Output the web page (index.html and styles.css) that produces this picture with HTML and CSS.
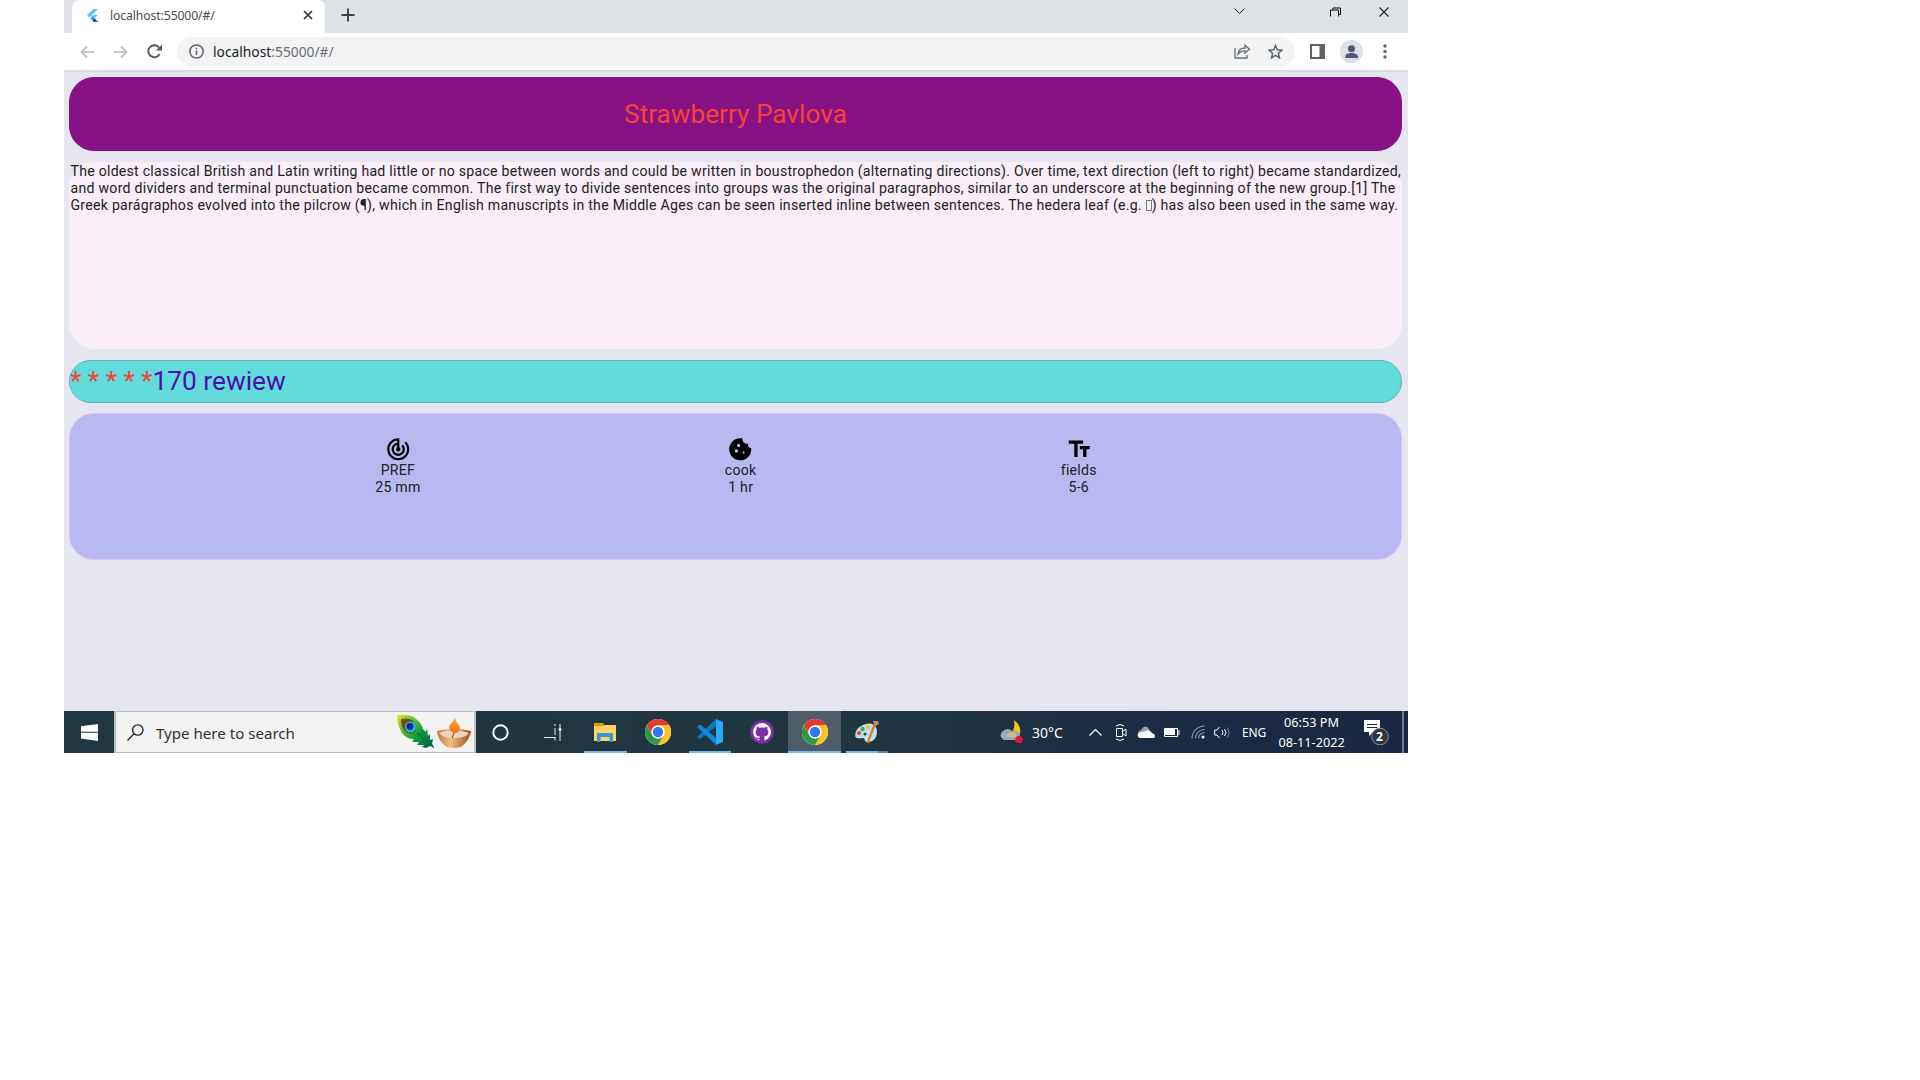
FILE: index.html
```
<!DOCTYPE html>
<html lang="en">
<head>
<meta charset="utf-8">
<title>localhost:55000/#/</title>
<link rel="stylesheet" href="styles.css">
</head>
<body>
<svg width="0" height="0" class="defs" aria-hidden="true">
  <symbol id="chrome" viewBox="0 0 48 48">
    <circle cx="24" cy="24" r="24" fill="#fff"/>
    <path fill="#e33b2e" d="M3.2 12A24 24 0 0 1 44.8 12H24a12 12 0 0 0-10.4 18z"/>
    <path fill="#fcc31e" d="M44.8 12A24 24 0 0 1 24 48L34.4 30A12 12 0 0 0 24 12z"/>
    <path fill="#2a9a47" d="M24 48A24 24 0 0 1 3.2 12L13.6 30a12 12 0 0 0 20.8 0z"/>
    <circle cx="24" cy="24" r="12" fill="#fff"/><circle cx="24" cy="24" r="9.6" fill="#2f78ee"/>
  </symbol>
</svg>
<div class="screen">
  <header class="tabs">
    <div class="tab">
      <svg class="flutter" width="11" height="13" viewBox="0 0 11 13"><path fill="#54c5f8" d="M6.5 0H11L2.2 8.5 0 6.3zM6.5 5.7H11L7.8 9 5 6.9z"/><path fill="#29a5ee" d="M3.2 9.2 5.4 7l2.3 2.2-2.3 2.2z"/><path fill="#01579b" d="M5.4 11.4 7.7 9.2 11 13H6.8z"/></svg>
      <span class="tab-title">localhost:55000/#/</span>
      <svg class="close" width="10" height="10" viewBox="0 0 10 10"><path d="M1 1l8 8M9 1L1 9" stroke="#333" stroke-width="1.7"/></svg>
    </div>
    <svg class="plus" width="14" height="14" viewBox="0 0 14 14"><path d="M7 .5v13M.5 7h13" stroke="#3c4043" stroke-width="1.9"/></svg>
    <svg class="win" width="112" height="14" viewBox="0 0 112 14" fill="none" stroke="#222" stroke-width="1"><path d="M.5 3.500l5 5 5-5"/><path stroke="#000" d="M96.500 11V4.500h8V11M99 4V2.500h7.500V9h-2" transform="translate(0 .5)"/></svg>
    <svg class="win-close" width="10" height="10" viewBox="0 0 10 10"><path d="M.5.5l9 9M9.500.5l-9 9" stroke="#222" stroke-width="1.100"/></svg>
  </header>
  <div class="toolbar">
    <svg width="14" height="12" viewBox="0 0 14 12" fill="none" stroke="#babcbe" stroke-width="1.600"><path d="M14 6H1.500M7 .7L1.500 6 7 11.300"/></svg>
    <svg width="14" height="12" viewBox="0 0 14 12" fill="none" stroke="#babcbe" stroke-width="1.600"><path d="M0 6h12.500M7 .7L12.500 6 7 11.300"/></svg>
    <svg class="reload" width="15" height="15" viewBox="0 0 15 15"><path d="M12.600 10A6 6 0 1 1 12 3.500" fill="none" stroke="#54575b" stroke-width="1.900"/><path d="M15 .5V6.500H9z" fill="#54575b"/></svg>
    <div class="omnibox">
      <svg width="15" height="15" viewBox="0 0 15 15"><circle cx="7.500" cy="7.500" r="6.600" fill="none" stroke="#5f6368" stroke-width="1.500"/><path d="M7.500 6.500V11M7.500 3.700v1.600" stroke="#5f6368" stroke-width="1.500"/></svg>
      <span class="url"><b>localhost</b>:55000/#/</span>
      <svg class="share" width="17" height="15" viewBox="0 0 17 15" fill="none" stroke="#6a6d71" stroke-width="1.300"><path d="M1 4v10h12v-3M4 10c.5-4 3-6 7-6V1.200L15.500 5.200 11 9V6.800C8 6.800 6 7.500 4 10z"/></svg>
      <svg width="15" height="15" viewBox="0 0 15 15" fill="none" stroke="#5f6368" stroke-width="1.500"><path d="M7.500 1.500l1.800 4.300 4.700.4-3.600 3.100 1.100 4.600-4-2.500-4 2.500 1.100-4.600L1 6.200l4.700-.4z"/></svg>
    </div>
    <svg class="side" width="15" height="15" viewBox="0 0 15 15"><path fill="#5f6368" fill-rule="evenodd" d="M0 0h15v15H0zM2 2v11h7.500V2z"/></svg>
    <svg class="avatar" width="23" height="23" viewBox="0 0 23 23"><circle cx="11.500" cy="11.500" r="11.500" fill="#dde1e7"/><circle cx="11.500" cy="8.800" r="3.500" fill="#4e5a70"/><path d="M5.300 18v-1.500c0-2.400 3.500-3.500 6.200-3.500s6.400 1.100 6.400 3.500V18z" fill="#4e5a70"/></svg>
    <svg width="4" height="15" viewBox="0 0 4 15" fill="#5f6368"><circle cx="2" cy="2" r="1.700"/><circle cx="2" cy="7.500" r="1.700"/><circle cx="2" cy="13" r="1.700"/></svg>
  </div>
  <main class="app">
    <h1 class="title">Strawberry Pavlova</h1>
    <div class="story">
      <p class="l1"><span>The oldest classical British and Latin writing had little or no space between words and could be written in boustrophedon (alternating directions). Over time, text direction (left to right) became standardized,</span></p>
      <p class="l2"><span>and word dividers and terminal punctuation became common. The first way to divide sentences into groups was the original paragraphos, similar to an underscore at the beginning of the new group.[1] The</span></p>
      <p class="l3"><span>Greek parágraphos evolved into the pilcrow (¶), which in English manuscripts in the Middle Ages can be seen inserted inline between sentences. The hedera leaf (e.g. <i class="tofu"></i>) has also been used in the same way.</span></p>
    </div>
    <div class="reviews"><span class="stars">* * * * *</span><span class="count">170 rewiew</span></div>
    <div class="facts">
      <div class="fact"><svg viewBox="0 0 24 24"><path d="M19.070 4.930l-1.410 1.410C19.100 7.790 20 9.790 20 12c0 4.420-3.580 8-8 8s-8-3.580-8-8c0-4.080 3.050-7.440 7-7.930v2.020C8.160 6.570 6 9.030 6 12c0 3.310 2.690 6 6 6s6-2.690 6-6c0-1.660-.67-3.160-1.760-4.240l-1.410 1.410C15.550 9.900 16 10.900 16 12c0 2.210-1.790 4-4 4s-4-1.790-4-4c0-1.860 1.280-3.410 3-3.860v2.140c-.6.35-1 .98-1 1.720 0 1.100.9 2 2 2s2-.9 2-2c0-.74-.4-1.380-1-1.720V2h-1C6.480 2 2 6.480 2 12s4.480 10 10 10 10-4.480 10-10c0-2.760-1.120-5.260-2.930-7.070z"/></svg><span>PREF</span><span>25 mm</span></div>
      <div class="fact"><svg viewBox="0 0 24 24"><path d="M21.950 10.990c-1.790-.03-3.700-1.950-2.680-4.220-2.980 1-5.770-1.590-5.190-4.560C6.950.71 2 6.580 2 12c0 5.520 4.480 10 10 10 5.890 0 10.540-5.080 9.950-11.010zM8.500 15c-.83 0-1.500-.67-1.500-1.500S7.670 12 8.500 12s1.500.67 1.500 1.500S9.330 15 8.500 15zm2-5C9.670 10 9 9.330 9 8.500S9.670 7 10.500 7s1.500.67 1.500 1.500-.67 1.500-1.500 1.500zm4.500 6c-.55 0-1-.45-1-1s.45-1 1-1 1 .45 1 1-.45 1-1 1z"/></svg><span>cook</span><span>1 hr</span></div>
      <div class="fact"><svg viewBox="0 0 24 24"><path d="M2.500 4v3h5v12h3V7h5V4h-13zm19 5h-9v3h3v7h3v-7h3V9z"/></svg><span>fields</span><span>5-6</span></div>
    </div>
  </main>
  <footer class="taskbar">
    <div class="start"><svg width="17" height="17" viewBox="0 0 17 17" fill="#fff"><path d="M0 2.200L17 0v7.700H0zM0 8.700h17V17L0 14.500z"/></svg></div>
    <div class="search">
      <svg width="17" height="17" viewBox="0 0 17 17" fill="none" stroke="#222" stroke-width="1.300"><circle cx="10.800" cy="6" r="5.200"/><path d="M7 9.800L.5 16.500"/></svg>
      <span class="placeholder">Type here to search</span>
      <svg class="feather" width="38" height="34" viewBox="0 0 38 34"><defs><linearGradient id="fg" x1="0" y1="0" x2="1" y2="1"><stop offset="0" stop-color="#f4e427"/><stop offset=".3" stop-color="#57c22b"/><stop offset=".65" stop-color="#07923e"/><stop offset="1" stop-color="#045c48"/></linearGradient></defs><path fill="url(#fg)" d="M0 0c8-1 15 0 19 4 5 4 6 7 7 10l3 3 1-4 1 8 2-2 0 6 3-1-1 5 2 3-4-1-4 2-4-1 2-2-7 0 2-3-7 0 2-3c-5 0-9-2-12-6C2 13 0 7 0 0z"/><path fill="#744d14" d="M4 4c8-2 14 1 15 8s-6 8-10 5-5-8-5-13z"/><circle cx="13.500" cy="12" r="5.500" fill="#10c4de"/><circle cx="13" cy="11.500" r="3.400" fill="#0b1d9b"/><path d="M20 18l17 15" stroke="#05604a" stroke-width="1"/></svg>
      <svg class="diya" width="34" height="31" viewBox="0 0 34 31"><defs><linearGradient id="bg"><stop offset="0" stop-color="#c07338"/><stop offset=".4" stop-color="#f0bd7c"/><stop offset="1" stop-color="#994f24"/></linearGradient><linearGradient id="fl" x1="0" y1="0" x2="0" y2="1"><stop offset="0" stop-color="#ffb02e"/><stop offset="1" stop-color="#fb741b"/></linearGradient></defs><path fill="url(#bg)" d="M0 14q17-4 34 0c-1 7-5 12-10 16q-7 2-14 0C4 26 1 21 0 14z"/><path fill="#ecd4bd" d="M2 16q15-6 30 0c-3 4-8 5-15 5S5 20 2 16z"/><path fill="url(#fl)" d="M18 0c0 5 5 8 5 11s-3 6-6 5-5-3-5-6c1-4 5-5 6-10z"/><path d="M17 16l-2 5" stroke="#704025"/></svg>
    </div>
    <div class="task first"><svg width="17" height="17" viewBox="0 0 17 17"><circle cx="8.500" cy="8.500" r="7.200" fill="none" stroke="#fff" stroke-width="2"/></svg></div>
    <div class="task"><svg width="18" height="17" viewBox="0 0 18 17" stroke="#e8eeee" fill="#fff"><path d="M0 13.500h11.500M11 0v2M11 4v7M11 13v3.500M16 0v17" fill="none"/><circle cx="16" cy="5.500" r="1.200"/></svg></div>
    <div class="task open"><svg width="22" height="19" viewBox="0 0 22 19"><path fill="#e09b00" d="M0 0h9l1.500 2H22v6H0z"/><path fill="#ffd465" d="M0 3h10l1-1h11v16H0z"/><path fill="#3498db" d="M3 10h16v9h-3.500v-5h-9v5H3z"/></svg></div>
    <div class="task"><svg width="26" height="26"><use href="#chrome"/></svg></div>
    <div class="task open"><svg width="26" height="26" viewBox="0 0 26 26"><path fill="#0a78c4" d="M19 0v7L4 19.500 2 20 0 18z"/><path fill="#1287d4" d="M0 8l2-2h2L19 19v7z"/><path fill="#29aaf5" d="M19 0l7 3v20l-7 3z"/></svg></div>
    <div class="task"><svg width="24" height="24" viewBox="0 0 24 24"><circle cx="12" cy="12" r="11.800" fill="#7d2da5"/><circle cx="12" cy="12" r="9" fill="#fff"/><path fill="#7d2da5" d="M9.500 22v-2.800c-2.500.4-3.300-1-4.300-2.200 1.400-.2 2 1.300 4.400.8.100-.5.300-.8.600-1.100-2.800-.4-4.600-1.500-4.600-4.500 0-1.100.4-2.100 1.100-2.800-.3-.9-.2-1.900.1-2.700 1.100 0 2 .5 2.700 1q2.500-.6 5 0c.7-.5 1.600-1 2.700-1 .3.800.4 1.800.1 2.700.7.700 1.100 1.700 1.100 2.800 0 3-1.800 4.100-4.600 4.500.5.400.7 1 .7 1.800V22z"/></svg></div>
    <div class="task open active"><svg width="26" height="26"><use href="#chrome"/></svg></div>
    <div class="task open stacked"><svg width="24" height="24" viewBox="0 0 24 24"><path fill="#c3e0ee" d="M11 4c7-2 11 2 11 8s-4 10-9 10-2-4-5-4-6 1-7.500-1C-.5 10 4 6 11 4z"/><circle cx="4" cy="13" r="2" fill="#e2423a"/><circle cx="7.500" cy="9" r="2.200" fill="#41ae49"/><circle cx="13" cy="7" r="2.200" fill="#f2c52b"/><circle cx="10" cy="14" r="1.600" fill="#294657"/><path d="M20 3.500L12.500 23" stroke="#dd7a2c" stroke-width="2.200"/><path fill="#c29366" d="M18 1l5 0 1 3-4 2z"/></svg></div>
    <div class="tray">
      <svg class="weather" width="24" height="24" viewBox="0 0 24 24"><path fill="#ffc20e" d="M15 0c5 4 7 8 6 14h-9c3-4 4-8 3-14z"/><path fill="#9aa9b7" d="M5 20a5 5 0 0 1-1-9q5-4 9 0 8-1 8 5t-6 4z"/><path fill="#c6bd8b" d="M7 17q0-5 7-5 4 1 4 5z"/><circle cx="20" cy="19.500" r="3.700" fill="#e0143c"/></svg>
      <span class="temp">30°C</span>
      <svg class="chev" width="13" height="8" viewBox="0 0 13 8" fill="none" stroke="#fff" stroke-width="1.200"><path d="M.5 7.500l6-6 6 6"/></svg>
      <svg class="meet" width="12" height="17" viewBox="0 0 12 17" fill="none" stroke="#fff"><path d="M1 2q4-3 8 0M1 15q4 3 8 0M1.500 4.500h6v8h-6zM8 7l3-2v7L8 10"/></svg>
      <svg class="cloud" width="18" height="12" viewBox="0 0 18 12"><path fill="#9aa3ac" d="M1 10Q0 5 4 4q4-7 9 0z"/><path fill="#fff" d="M3 12q-3-1-2-4 3-3 6-2 5-4 8 1 3 1 3 3t-3 2z"/></svg>
      <svg class="batt" width="16" height="9" viewBox="0 0 16 9"><path fill="none" stroke="#fff" d="M.5.5h13v8H.5zM15 2v5"/><path fill="#fff" d="M1 1h10v6H1z"/></svg>
      <svg class="wifi" width="14" height="14" viewBox="0 0 14 14" fill="none" stroke="#8c99a8" stroke-width="1.100"><path d="M1 13.500A12.500 12.500 0 0 1 13.500 1M4.500 13.500a9 9 0 0 1 9-9M7.500 13.500a6 6 0 0 1 6-6"/><circle cx="12" cy="12" r="1" fill="#fff" stroke="#fff"/></svg>
      <svg class="vol" width="16" height="13" viewBox="0 0 16 13" fill="none" stroke="#fff"><path d="M5.500 1L3 4H.7v5H3l2.500 3M8 4q2 2.500 0 5M10.500 3q3 3.500 0 7"/><path d="M13 1.500q4 5 0 10" stroke="#77869a"/></svg>
      <span class="lang">ENG</span>
      <div class="clock"><span>06:53 PM</span><span class="date">08-11-2022</span></div>
      <div class="note"><svg width="25" height="26" viewBox="0 0 25 26"><path fill="#fff" d="M0 1h16v12H9l-4 4v-4H0z"/><path d="M3 5.500h10M3 8.500h10" stroke="#1b2943"/><circle cx="16" cy="17.500" r="8.300" fill="#30353e" stroke="#8c939e"/></svg><b>2</b></div>
      <i class="peek"></i>
    </div>
  </footer>
</div>
</body>
</html>
```
FILE: styles.css
```
* { box-sizing: border-box; }
body { margin: 0; background: #fff; font-family: "Noto Sans", sans-serif; }
svg { display: block; flex: none; }
.defs { position: absolute; }
span { white-space: nowrap; }
.screen { width: 1344px; height: 753px; margin-left: 64px; display: flex; flex-direction: column; background: #e6e6f0; overflow: hidden; }

.tabs { height: 33px; background: #dee1e6; display: flex; align-items: flex-start; padding-left: 8px; }
.tab { width: 253px; height: 33px; background: #fff; border-radius: 7px 7px 0 0; display: flex; align-items: center; padding: 0 12px 3px 15px; }
.tab-title { font-size: 12.200px; color: #4a4d51; margin-left: 12px; flex: 1; letter-spacing: -.1px; }
.plus { margin: 8px 0 0 16px; }
.win { margin: 5px 0 0 auto; }
.win-close { margin: 7px 19px 0 33px; }

.toolbar { height: 39px; background: #fff; border-bottom: 2px solid #d9dbe0; display: flex; align-items: center; padding: 0 20px 0 16px; }
.toolbar > svg:nth-child(2) { margin-left: 20px; }
.reload { margin-left: 19px; }
.omnibox { height: 29px; width: 1118px; margin-left: 15px; border-radius: 15px; background: #f1f3f4; display: flex; align-items: center; padding: 0 12px; }
.url { font-size: 13.800px; color: #6b6e72; margin-left: 9px; flex: 1; }
.url b { font-weight: 400; color: #202124; }
.share { margin-right: 17px; }
.side { margin-left: 15px; }
.avatar { margin: 0 20px 0 15px; }

.app { flex: 1; padding: 5px 6px 0 5px; font-family: Roboto, sans-serif; color: #212124; }
.title { height: 74px; margin: 0 0 11px; border-radius: 25px; background: #881183; border: 1px solid #7c1682; color: #f44336; font-size: 26.200px; font-weight: 400; display: flex; align-items: center; justify-content: center; }
.story { height: 187px; padding: 1px 0 0 1.500px; border-radius: 25px; background: #f9eef8; font-size: 14.120px; line-height: 17px; letter-spacing: .25px; }
.story p { margin: 0; }
.l2, .l3 { letter-spacing: .26px; }
.tofu { display: inline-block; width: 6px; height: 11px; border: 1px solid #777; vertical-align: -1px; }
.reviews { height: 43px; margin-top: 11px; border-radius: 22px; background: #62dbdb; border: 1px solid #66adb9; font-size: 26.250px; line-height: 40px; display: flex; }
.stars { color: #f44336; }
.count { color: #4a0fae; }
.facts { height: 147px; margin-top: 10px; border-radius: 25px; background: #b9b9f2; border: 1px solid #dfc0f0; display: flex; justify-content: space-evenly; padding: 22px 0 0 1px; font-size: 14.120px; line-height: 17px; letter-spacing: .25px; }
.fact { display: flex; flex-direction: column; align-items: center; }
.fact svg { width: 26.500px; height: 26.500px; margin-bottom: -1px; fill: #000; }

.taskbar { height: 42px; background: linear-gradient(90deg, #203740, #21353f 60%, #1b2a43 85%, #1a2742); display: flex; color: #fff; }
.start { width: 50px; display: flex; align-items: center; justify-content: center; }
.search { width: 362px; border: 2px solid #bcbcbc; border-width: 1px 2px; background: #f2f2f2; color: #333; display: flex; align-items: center; padding: 0 3px 0 11px; }
.placeholder { font-size: 15.100px; margin-left: 12px; padding-top: 2px; flex: 1; }
.diya { margin-left: 2px; }
.task { width: 52.300px; position: relative; display: flex; align-items: center; justify-content: center; }
.first { width: 51px; padding-right: 2px; }
.open::after { content: ""; position: absolute; left: 5px; right: 5px; bottom: 0; height: 2px; background: #76b9ed; }
.active { background: #4e5d67; }
.active::after { left: 0; right: 0; }
.stacked::after { background: linear-gradient(90deg, #76b9ed 76%, #5688b0 76%); }
.tray { flex: 1; display: flex; align-items: center; }
.weather { margin-left: 106px; }
.temp { font-size: 14px; margin-left: 9px; width: 57px; }
.meet { margin-left: 13px; }
.cloud { margin-left: 10px; }
.batt { margin-left: 9px; }
.wifi { margin-left: 11px; }
.vol { margin-left: 9px; }
.lang { font-size: 12px; margin-left: 12px; width: 35px; letter-spacing: -.2px; }
.clock { width: 69px; font-size: 12.700px; line-height: 20px; display: flex; flex-direction: column; align-items: center; }
.note { position: relative; margin-left: 18px; }
.note b { position: absolute; left: 12px; top: 9px; font-size: 12px; line-height: 17px; }
.peek { width: 2px; height: 42px; background: #717b8b; margin: 0 4px 0 auto; }
```
